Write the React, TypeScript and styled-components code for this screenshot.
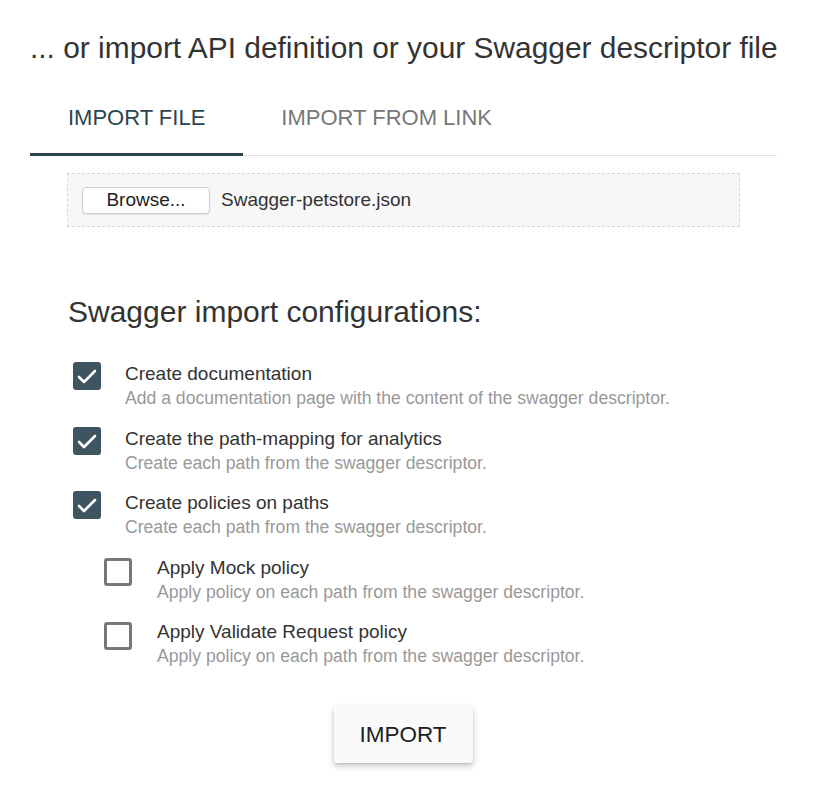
import React from "react";
import styled, { createGlobalStyle } from "styled-components";

const Global = createGlobalStyle`
  html, body { margin: 0; padding: 0; background: #fff; }
  body { font-family: "Liberation Sans", Arial, sans-serif; }
`;

const Page = styled.div`
  width: 818px;
  padding: 30px 41px 24px 30px;
  box-sizing: border-box;
`;

const Title = styled.h2`
  margin: 0;
  font-size: 29.9px;
  font-weight: 400;
  color: #333;
  line-height: 36px;
  white-space: nowrap;
`;

const Tabs = styled.div`
  margin-top: 34px;
  display: flex;
  border-bottom: 1px solid #e0e0e0;
`;

const Tab = styled.div<{ $active?: boolean }>`
  padding: 5px 38px 0;
  height: 56px;
  display: flex;
  align-items: flex-start;
  box-sizing: border-box;
  font-size: 22px;
  color: ${(p) => (p.$active ? "#2c4450" : "#777")};
  border-bottom: 3px solid ${(p) => (p.$active ? "#2c4450" : "transparent")};
  margin-bottom: -1px;
  white-space: nowrap;
`;

const Body = styled.div`
  padding: 17px 0 0 37px;
`;

const FileBox = styled.div`
  width: 673px;
  height: 54px;
  box-sizing: border-box;
  background: #f7f7f7;
  border: 1px dashed #d8d8d8;
  display: flex;
  align-items: center;
  padding-left: 14px;
  gap: 11px;
`;

const Browse = styled.div`
  width: 128px;
  height: 27px;
  box-sizing: border-box;
  background: #fff;
  border: 1px solid #d0d0d0;
  border-radius: 4px;
  box-shadow: 0 1px 1px rgba(0, 0, 0, 0.08);
  display: flex;
  align-items: center;
  justify-content: center;
  font-size: 19px;
  color: #222;
`;

const FileName = styled.span`
  font-size: 19px;
  color: #333;
`;

const Subtitle = styled.h3`
  margin: 68px 0 0 1px;
  font-size: 30px;
  font-weight: 400;
  color: #333;
  line-height: 34px;
  white-space: nowrap;
`;

const List = styled.div`
  margin-top: 33px;
  display: flex;
  flex-direction: column;
  gap: 15.5px;
`;

const Row = styled.div<{ $indent?: boolean }>`
  display: flex;
  align-items: flex-start;
  padding-left: ${(p) => (p.$indent ? "37px" : "6px")};
  gap: ${(p) => (p.$indent ? "25px" : "24px")};
`;

const Box = styled.div<{ $checked?: boolean }>`
  width: 28px;
  height: 28px;
  flex: none;
  box-sizing: border-box;
  margin-top: ${(p) => (p.$checked ? "0" : "2px")};
  border-radius: 3px;
  background: ${(p) => (p.$checked ? "#3e5561" : "#fff")};
  border: ${(p) => (p.$checked ? "none" : "3px solid #777")};
  display: flex;
  align-items: center;
  justify-content: center;
`;

const Texts = styled.div`
  display: flex;
  flex-direction: column;
`;

const Label = styled.div`
  font-size: 19px;
  line-height: 24px;
  color: #333;
  white-space: nowrap;
`;

const Desc = styled.div`
  font-size: 17.6px;
  line-height: 26px;
  color: #999;
  margin-top: -1px;
  white-space: nowrap;
`;

const Footer = styled.div`
  display: flex;
  justify-content: center;
  padding-top: 37px;
  margin-left: -30px;
  width: 818px;
  padding-right: 12px;
  box-sizing: border-box;
`;

const ImportButton = styled.div`
  width: 139px;
  height: 57px;
  background: #fafafa;
  border-radius: 3px;
  box-shadow: 0 3px 6px rgba(0, 0, 0, 0.22), 0 1px 2px rgba(0, 0, 0, 0.1);
  display: flex;
  align-items: center;
  justify-content: center;
  font-size: 22.5px;
  color: #222;
`;

const Check = () => (
  <svg width="20" height="16" viewBox="0 0 20 16">
    <path d="M2 9 L7 14 L18 3" fill="none" stroke="#fff" strokeWidth="2.6" strokeLinecap="round" strokeLinejoin="round" />
  </svg>
);

const items = [
  { label: "Create documentation", desc: "Add a documentation page with the content of the swagger descriptor.", checked: true },
  { label: "Create the path-mapping for analytics", desc: "Create each path from the swagger descriptor.", checked: true },
  { label: "Create policies on paths", desc: "Create each path from the swagger descriptor.", checked: true },
  { label: "Apply Mock policy", desc: "Apply policy on each path from the swagger descriptor.", checked: false, indent: true },
  { label: "Apply Validate Request policy", desc: "Apply policy on each path from the swagger descriptor.", checked: false, indent: true },
];

export default function App() {
  return (
    <>
      <Global />
      <Page>
        <Title>... or import API definition or your Swagger descriptor file</Title>
        <Tabs>
          <Tab $active>IMPORT FILE</Tab>
          <Tab>IMPORT FROM LINK</Tab>
        </Tabs>
        <Body>
          <FileBox>
            <Browse>Browse...</Browse>
            <FileName>Swagger-petstore.json</FileName>
          </FileBox>
          <Subtitle>Swagger import configurations:</Subtitle>
          <List>
            {items.map((it) => (
              <Row key={it.label} $indent={it.indent}>
                <Box $checked={it.checked}>{it.checked && <Check />}</Box>
                <Texts>
                  <Label>{it.label}</Label>
                  <Desc>{it.desc}</Desc>
                </Texts>
              </Row>
            ))}
          </List>
        </Body>
        <Footer>
          <ImportButton>IMPORT</ImportButton>
        </Footer>
      </Page>
    </>
  );
}
